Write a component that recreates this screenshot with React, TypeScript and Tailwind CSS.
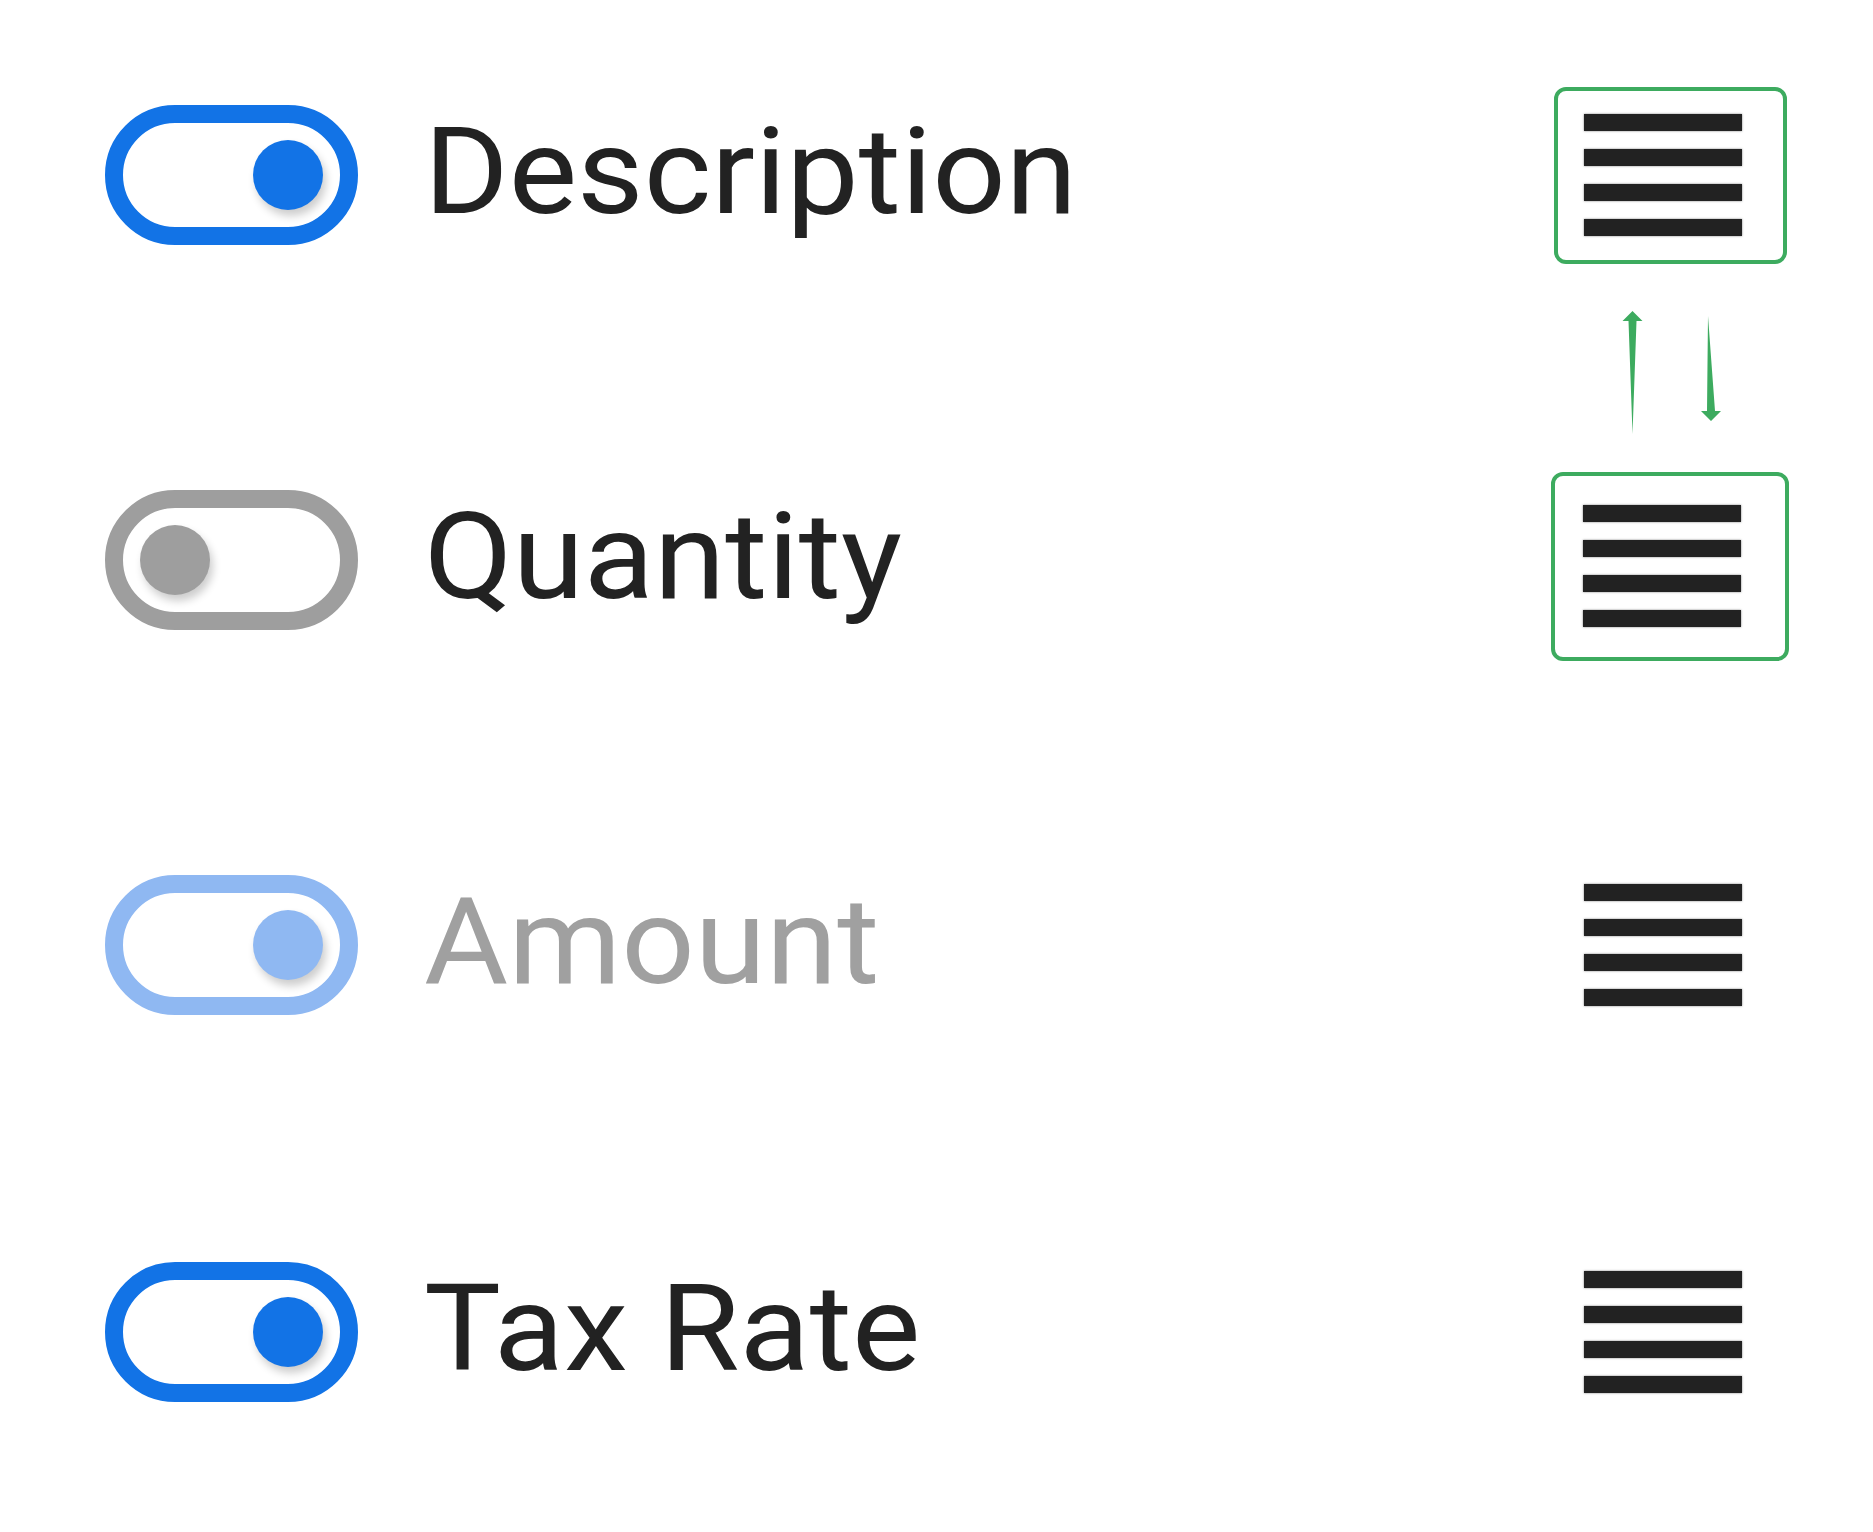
import React from "react";

function Toggle({ on, dim }: { on: boolean; dim?: boolean }) {
  const ring = !on ? "border-[#9e9e9e]" : dim ? "border-[#8fb8f2]" : "border-[#1273e6]";
  const knob = !on ? "bg-[#9e9e9e]" : dim ? "bg-[#8fb8f2]" : "bg-[#1273e6]";
  return (
    <div
      className={`flex h-[140px] w-[253px] shrink-0 items-center rounded-full border-[18px] bg-white px-[17px] ${ring} ${
        on ? "justify-end" : "justify-start"
      }`}
    >
      <div
        className={`h-[70px] w-[70px] rounded-full shadow-[3px_6px_9px_rgba(0,0,0,0.2)] ${knob}`}
      />
    </div>
  );
}

function Bars() {
  return (
    <div className="flex w-[158px] flex-col gap-[18px]">
      <div className="h-[17px] bg-[#222222] shadow-[0_0_2px_rgba(0,0,0,0.5)]" />
      <div className="h-[17px] bg-[#222222] shadow-[0_0_2px_rgba(0,0,0,0.5)]" />
      <div className="h-[17px] bg-[#222222] shadow-[0_0_2px_rgba(0,0,0,0.5)]" />
      <div className="h-[17px] bg-[#222222] shadow-[0_0_2px_rgba(0,0,0,0.5)]" />
    </div>
  );
}

function Row({
  label,
  on,
  dim,
  handle,
}: {
  label: string;
  on: boolean;
  dim?: boolean;
  handle: React.ReactNode;
}) {
  return (
    <div className="flex h-[140px] items-center pl-[105px]">
      <Toggle on={on} dim={dim} />
      <span
        className={`mb-[6px] ml-[66px] origin-left scale-x-[1.075] text-[120px] leading-none ${
          dim ? "text-[#a0a0a0]" : "text-[#222222]"
        }`}
        style={{ fontFamily: "Roboto, sans-serif" }}
      >
        {label}
      </span>
      <div className="ml-auto mr-[84px] flex w-[238px] justify-center">{handle}</div>
    </div>
  );
}

export default function App() {
  return (
    <div className="min-h-[1532px] w-[1873px] bg-white pt-[105px]">
      <Row
        label="Description"
        on
        handle={
          <div className="flex h-[177px] w-[233px] items-center rounded-[12px] border-4 border-[#3dab5f] pl-[26px]">
            <Bars />
          </div>
        }
      />
      {/* reorder arrows between the two boxed handles */}
      <div className="h-[245px] pt-[60px]">
        <svg
          className="ml-[1600px]"
          width="130"
          height="130"
          viewBox="1600 305 130 130"
        >
          <polygon
            points="1632.5,434 1628.5,321 1622.5,321 1632.5,311 1642.5,321 1636.5,321"
            fill="#3dab5f"
          />
          <polygon
            points="1708,316 1707,411 1701,411 1711,421 1721,411 1715,411"
            fill="#3dab5f"
          />
        </svg>
      </div>
      <Row
        label="Quantity"
        on={false}
        handle={
          <div className="mt-3 flex h-[189px] w-[238px] items-center rounded-[12px] border-4 border-[#3dab5f] pl-[28px]">
            <Bars />
          </div>
        }
      />
      <div className="h-[245px]" />
      <Row
        label="Amount"
        on
        dim
        handle={
          <div className="flex w-[238px] pl-[33px]">
            <Bars />
          </div>
        }
      />
      <div className="h-[247px]" />
      <Row
        label="Tax Rate"
        on
        handle={
          <div className="flex w-[238px] pl-[33px]">
            <Bars />
          </div>
        }
      />
    </div>
  );
}
